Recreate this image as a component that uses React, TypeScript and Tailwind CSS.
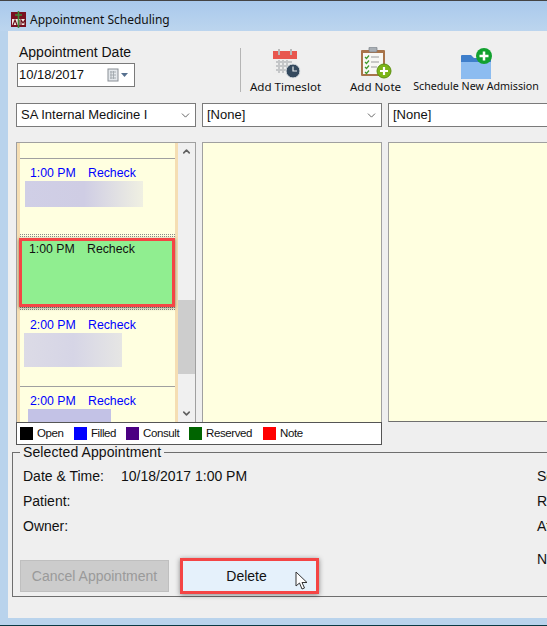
import React from 'react';
import { ChevronDown, ChevronUp } from 'lucide-react';

const sans = "font-['Liberation_Sans',Arial,sans-serif]";
const ui = "font-['Noto_Sans','Open_Sans',sans-serif]";

const Combo = ({ label, wide }: { label: string; wide?: boolean }) => (
  <div className={`h-[24px] bg-white border border-[#7a7a7a] flex items-center pl-1 pr-[3px] text-[13px] text-[#111] shrink-0 ${wide ? 'w-[240px]' : 'w-[180px]'}`}>
    <span className="flex-1 whitespace-nowrap">{label}</span>
    <ChevronDown className="w-[13px] h-[13px] text-[#444]" strokeWidth={1.5} />
  </div>
);

const Tool = ({ label, w, small, children }: { label: string; w: string; small?: boolean; children: React.ReactNode }) => (
  <div className={`flex flex-col items-center shrink-0 ${w}`}>
    <div className="h-[33px] flex items-end">{children}</div>
    <span className={`${ui} -mt-[1px] text-[#111] whitespace-nowrap ${small ? 'text-[10.7px]' : 'text-[11.6px]'}`}>{label}</span>
  </div>
);

const Appt = ({ time, blur }: { time: string; blur?: string }) => (
  <div className="text-[12.3px] text-[#0000ff] pl-[10px]">
    <div className="flex h-[17px] items-center">
      <span className="w-[58px] whitespace-nowrap">{time}</span>
      <span>Recheck</span>
    </div>
    {blur && <div className={blur} />}
  </div>
);

const Swatch = ({ color, label, w }: { color: string; label: string; w: string }) => (
  <div className={`flex items-center shrink-0 ${w}`}>
    <div className={`w-[13px] h-[13px] ${color}`} />
    <span className="ml-[4px] tracking-[-0.4px]">{label}</span>
  </div>
);

const Row = ({ label, value }: { label: string; value?: string }) => (
  <div className="h-[25px] flex items-center whitespace-nowrap">
    <span className="w-[98px]">{label}</span>
    {value && <span>{value}</span>}
  </div>
);

export default function App() {
  return (
    <div className={`${sans} w-[547px] h-[626px] overflow-hidden flex flex-col bg-[#b9d3ec] border-t border-[#444]`}>
      {/* title bar */}
      <div className="h-[30px] shrink-0 flex items-center pl-[10px] pt-[7px] bg-gradient-to-b from-[#a9c9ec] to-[#bcd5ee]">
        <svg width="17" height="17" viewBox="0 0 17 17">
          <rect x="1" y="1" width="15" height="15" fill="#7a1020" />
          <rect x="2" y="8" width="13" height="6" fill="#f3e9e4" />
          <path d="M3 14l2-5 2 5M9 9v5M11 14V9l2 3 2-3v5" stroke="#6a0f1c" strokeWidth="1.2" fill="none" />
          <path d="M8.5 0v17M5 4h7" stroke="#3f8a3a" strokeWidth="1.6" />
        </svg>
        <span className={`${ui} ml-[3px] text-[12px] text-[#111]`}>Appointment Scheduling</span>
      </div>

      <div className="flex-1 min-h-0 ml-[8px] bg-[#efefef] overflow-hidden flex flex-col">
        {/* toolbar */}
        <div className="h-[72px] shrink-0 flex">
          <div className="w-[232px] shrink-0 pl-[9px] pt-[13px]">
            <div className="text-[14px] leading-[16px] text-[#111] ml-[2px]">Appointment Date</div>
            <div className="mt-[3px] w-[118px] h-[24px] bg-white border border-[#7a7a7a] flex items-center pl-[1px] pr-[4px] text-[13px] text-[#111]">
              <span className="flex-1">10/18/2017</span>
              <svg width="23" height="14" viewBox="0 0 23 14">
                <rect x="1" y="1" width="10" height="12" fill="#e4e8ec" stroke="#8a8f96" />
                <path d="M3 4h6M3 7h6M3 10h6M4 3v8M6.500 3v8" stroke="#a2a8ae" strokeWidth="0.9" />
                <path d="M14 5h7l-3.500 4z" fill="#56708f" />
              </svg>
            </div>
          </div>
          <div className="w-px h-[44px] mt-[17px] bg-[#b5b5b5] shrink-0" />
          <div className="flex pt-[15px]">
            <Tool label="Add Timeslot" w="w-[89px]">
              <svg width="30" height="31" viewBox="0 0 30 31">
                <rect x="2" y="3" width="24" height="24" fill="#eeeeee" />
                <rect x="2" y="3" width="24" height="8" fill="#e8574f" />
                <rect x="7" y="1" width="2" height="6" fill="#b9b9b9" />
                <rect x="19" y="1" width="2" height="6" fill="#b9b9b9" />
                <path d="M5 14h16M5 18h14M5 22h12M8 12v13M12 12v13M16 12v13" stroke="#c4c6c8" strokeWidth="2" />
                <circle cx="22" cy="23" r="7" fill="#34495e" stroke="#dfe3e6" />
                <path d="M22 18.500V23h4" stroke="#e6e9ec" strokeWidth="1.200" fill="none" />
              </svg>
            </Tool>
            <Tool label="Add Note" w="w-[91px]">
              <svg width="32" height="32" viewBox="0 0 32 32">
                <rect x="1" y="3" width="24" height="26" rx="1" fill="#a8744a" />
                <rect x="3" y="6" width="20" height="21" fill="#f8f8f4" />
                <rect x="9" y="0" width="8" height="5" rx="1" fill="#a9afb5" stroke="#787e84" strokeWidth="0.7" />
                <path d="M5 10l1.500 1.500L9 8.500M5 15l1.500 1.500L9 13.500M5 20l1.500 1.500L9 18.500M5 25l1.500 1.500L9 23.500" stroke="#3f9a2b" strokeWidth="1.200" fill="none" />
                <path d="M11 10h8M11 15h8M11 20h6" stroke="#9a9a9a" />
                <circle cx="24" cy="24" r="7" fill="#7cb518" stroke="#5c8f10" />
                <path d="M24 20v8M20 24h8" stroke="#fff" strokeWidth="2.200" />
              </svg>
            </Tool>
            <Tool label="Schedule New Admission" w="w-[130px] -ml-[10px]" small>
              <svg className="-mb-[2px]" width="33" height="33" viewBox="0 0 33 33">
                <path d="M1 8a1 1 0 011-1h9l3 3h16a1 1 0 011 1v19a1 1 0 01-1 1H2a1 1 0 01-1-1z" fill="#3f7fcb" />
                <path d="M1 14h30v16a1 1 0 01-1 1H2a1 1 0 01-1-1z" fill="#8cbcf0" />
                <circle cx="24" cy="8" r="8" fill="#12a12f" />
                <path d="M24 3.500v9M19.500 8h9" stroke="#fff" strokeWidth="2.500" />
              </svg>
            </Tool>
          </div>
        </div>

        {/* provider selects */}
        <div className="shrink-0 h-[24px] flex gap-[6px] pl-[8px]">
          <Combo label="SA Internal Medicine I" />
          <Combo label="[None]" />
          <Combo label="[None]" wide />
        </div>

        {/* schedule columns */}
        <div className="mt-[15px] h-[280px] shrink-0 flex gap-[6px] pl-[8px]">
          <div className="w-[180px] shrink-0 border border-b-0 border-[#a0a0a0] flex">
            <div className="w-[161px] h-[279px] overflow-hidden bg-[#ffffe0] px-[3px] shadow-[inset_3px_0_0_#f5deb3,inset_-3px_0_0_#f5deb3] flex flex-col">
              <div className="h-[15px] shrink-0 border-b border-[#a0a0a0] box-content" />
              <div className="h-[75px] shrink-0 pt-[6px]">
                <Appt time="1:00 PM" blur="-mt-[1px] ml-[-5px] w-[118px] h-[26px] bg-gradient-to-r from-[#d0cfe6] via-[#cfcde4] to-[#f0f0e2]" />
              </div>
              <div className="h-[3px] shrink-0 border-y border-dotted border-[#8a8a8a]" />
              <div className="h-[69px] shrink-0 -ml-[1px] mt-[1px] border-[3px] border-[#f44545] bg-[#90ee90] shadow-[0_1px_3px_rgba(0,0,0,0.5)] relative">
                <div className="text-[12.3px] text-[#111] pl-[7px] flex h-[17px] items-center">
                  <span className="w-[58px]">1:00 PM</span>
                  <span>Recheck</span>
                </div>
              </div>
              <div className="h-[3px] shrink-0 border-y border-dotted border-[#8a8a8a]" />
              <div className="h-[69px] shrink-0 pt-[7px] border-b border-[#a0a0a0] box-content">
                <Appt time="2:00 PM" blur="-mt-[1px] ml-[-6px] w-[98px] h-[34px] bg-gradient-to-r from-[#dcdbe6] via-[#d6d5e6] to-[#e6e6e4]" />
              </div>
              <div className="pt-[6px]">
                <Appt time="2:00 PM" blur="-mt-[1px] ml-[-2px] w-[83px] h-[14px] bg-[#c3c2e6]" />
              </div>
            </div>
            <div className="flex-1 bg-[#f0f0f0] flex flex-col items-center justify-between text-[#606060]">
              <div className="w-full h-[17px] flex items-center justify-center"><ChevronUp className="w-[11px] h-[11px]" strokeWidth={3.5} /></div>
              <div className="w-full flex-1 relative">
                <div className="absolute left-0 right-0 top-[140px] h-[74px] bg-[#cdcdcd]" />
              </div>
              <div className="w-full h-[17px] flex items-center justify-center"><ChevronDown className="w-[11px] h-[11px]" strokeWidth={3.5} /></div>
            </div>
          </div>
          <div className="w-[180px] shrink-0 bg-[#ffffe0] border border-[#a0a0a0] border-b-0" />
          <div className="w-[240px] shrink-0 bg-[#ffffe0] border border-[#a0a0a0] border-b-[#6f6f6f]" />
        </div>

        {/* legend */}
        <div className="ml-[8px] w-[366px] h-[23px] shrink-0 bg-white border border-[#555] flex items-center pl-[3px] text-[11.5px] text-[#111]">
          <Swatch color="bg-black" label="Open" w="w-[54px]" />
          <Swatch color="bg-[#0000ff]" label="Filled" w="w-[52px]" />
          <Swatch color="bg-[#4b0082]" label="Consult" w="w-[63px]" />
          <Swatch color="bg-[#006400]" label="Reserved" w="w-[74px]" />
          <Swatch color="bg-[#ff0000]" label="Note" w="w-[50px]" />
        </div>

        {/* selected appointment */}
        <fieldset className="ml-[4px] w-[700px] h-[152px] shrink-0 border border-[#6e6e6e] pl-[10px] text-[14px] text-[#111]">
          <legend className="-ml-[3px] px-[3px] text-[14px] leading-[15px] tracking-[0.1px]">Selected Appointment</legend>
          <div className="flex pt-[4px]">
            <div className="w-[514px] shrink-0">
              <Row label="Date & Time:" value="10/18/2017 1:00 PM" />
              <Row label="Patient:" />
              <Row label="Owner:" />
              <div className="flex items-center mt-[19px] -ml-[3px]">
                <div className="w-[149px] h-[32px] bg-[#cccccc] border border-[#bfbfbf] text-[#9a9a9a] flex items-center justify-center">Cancel Appointment</div>
                <div className="relative ml-[11px] w-[139px] h-[36px] pr-[6px] border-[3px] border-[#f44545] bg-[#e5f1fb] shadow-[0_1px_5px_rgba(0,0,0,0.45)] flex items-center justify-center">
                  Delete
                  <svg className="absolute left-[112px] top-[10px]" width="13" height="19" viewBox="0 0 13 19">
                    <path d="M1 1v14l3.500-3 2.500 6 2.500-1-2.500-5.500H12z" fill="#fff" stroke="#333" strokeWidth="1" />
                  </svg>
                </div>
              </div>
            </div>
            <div className="flex flex-col">
              <div className="h-[25px] flex items-center">Service:</div>
              <div className="h-[25px] flex items-center">Reason:</div>
              <div className="h-[25px] flex items-center">Attending:</div>
              <div className="h-[25px] mt-[8px] flex items-center">Notes:</div>
            </div>
          </div>
        </fieldset>
      </div>
      <div className="h-[8px] shrink-0 bg-[#b9d3ec] border-b border-[#0b3a44]" />
    </div>
  );
}
